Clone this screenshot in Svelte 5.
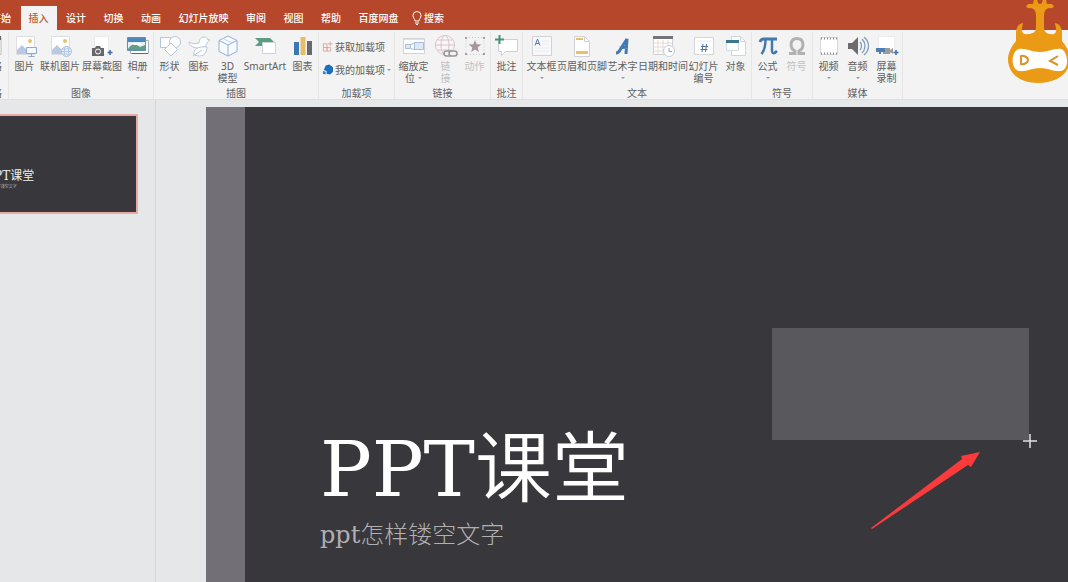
<script lang="ts">
  type Command = {
    icon: string;
    lines: string[];
    size?: 'medium' | 'wide' | 'full';
    menu?: boolean;
    disabled?: boolean;
  };

  type Group = { title: string; commands: Command[]; addins?: boolean };

  const tabs = ['开始', '插入', '设计', '切换', '动画', '幻灯片放映', '审阅', '视图', '帮助', '百度网盘'];
  let activeTab = $state('插入');

  const groups: Group[] = [
    {
      title: '图像',
      commands: [
        { icon: 'picture', lines: ['图片'] },
        { icon: 'online', lines: ['联机图片'], size: 'wide' },
        { icon: 'screenshot', lines: ['屏幕截图'], size: 'wide', menu: true },
        { icon: 'album', lines: ['相册'], menu: true },
      ],
    },
    {
      title: '插图',
      commands: [
        { icon: 'shapes', lines: ['形状'], menu: true },
        { icon: 'icons', lines: ['图标'] },
        { icon: 'cube', lines: ['3D', '模型'] },
        { icon: 'smartart', lines: ['SmartArt'], size: 'full' },
        { icon: 'chart', lines: ['图表'] },
      ],
    },
    { title: '加载项', commands: [], addins: true },
    {
      title: '链接',
      commands: [
        { icon: 'zoom', lines: ['缩放定', '位'], size: 'medium', menu: true },
        { icon: 'link', lines: ['链', '接'], disabled: true },
        { icon: 'action', lines: ['动作'], disabled: true },
      ],
    },
    { title: '批注', commands: [{ icon: 'comment', lines: ['批注'] }] },
    {
      title: '文本',
      commands: [
        { icon: 'textbox', lines: ['文本框'], size: 'medium', menu: true },
        { icon: 'header', lines: ['页眉和页脚'], size: 'full' },
        { icon: 'wordart', lines: ['艺术字'], size: 'medium', menu: true },
        { icon: 'date', lines: ['日期和时间'], size: 'full' },
        { icon: 'number', lines: ['幻灯片', '编号'], size: 'medium' },
        { icon: 'object', lines: ['对象'] },
      ],
    },
    {
      title: '符号',
      commands: [
        { icon: 'pi', lines: ['公式'], menu: true },
        { icon: 'omega', lines: ['符号'], disabled: true },
      ],
    },
    {
      title: '媒体',
      commands: [
        { icon: 'video', lines: ['视频'], menu: true },
        { icon: 'audio', lines: ['音频'], menu: true },
        { icon: 'record', lines: ['屏幕', '录制'] },
      ],
    },
  ];

  const landscape =
    '<path d="M3.500 1.500h18v18h-18z" fill="#fff" stroke="#dcdee4"/><circle cx="17" cy="6" r="2" fill="#e9c070"/><path d="M4 19v-4l5-5 6 6 2-2 4 4v1z" fill="#b9c9e2"/>';

  const icons: Record<string, string> = {
    picture:
      landscape +
      '<path d="M13.500 12.500h10v6h-10z" fill="#f5f9ff" stroke="#8fa9d0"/><path d="M18.500 19v2M15.500 21.500h6" stroke="#8fa9d0"/>',
    online:
      landscape +
      '<g fill="#edf3fc" stroke="#a5bbdc" stroke-width=".8"><circle cx="18.500" cy="16.500" r="5"/><ellipse cx="18.500" cy="16.500" rx="2.200" ry="5"/><path d="M13.500 16.500h10M14.500 14h8M14.500 19h8"/></g>',
    screenshot:
      '<path d="M4.500 1.500h14v18h-14z" fill="#fff" stroke="#eaeaea"/><path d="M2 13h3l1-2h4l1 2h3v8H2z" fill="#68686a"/><circle cx="8" cy="16.500" r="2.500" fill="#68686a" stroke="#fff"/><path d="M20 15v5M17.500 17.500h5" stroke="#3d6ca8" stroke-width="1.500"/>',
    album:
      '<path d="M4.500 5.500h18v13h-18z" fill="#fff" stroke="#a8b4c4"/><path d="M1.500 2.500h18v13h-18z" fill="#e6f0f8" stroke="#638db8"/><path d="M2 3h17v4H2z" fill="#4d87bd"/><path d="M2 14c4-6 8-5 12-2l5-2v5H2z" fill="#619f83"/><path d="M6 8h8l3 2H8z" fill="#fff"/><path d="M6 18.500h16" stroke="#666"/>',
    shapes:
      '<g fill="#fff" stroke="#b3c5df"><path d="M2.500 2.500h10v10h-10z"/><circle cx="17" cy="7" r="5.500"/><path d="m13 8 6.500 6.500L13 21l-6.500-6.500z"/></g>',
    icons:
      '<g fill="#fff" stroke="#b7c6de"><path d="M12 8c0-3 2-6 5-6 2 0 3 1 3.500 2.500L23 5l-2.500 2c-1 4-4 6-9 6-5 0-9-2-9.500-6 3 2 7 2 10 1z"/><path d="M7 20c-1-5 3-9 13-8 0 7-5 11-12 8z"/><path d="m6 21 9-6" /></g>',
    cube:
      '<path d="m12 1 9 4.500v11L12 21l-9-4.500v-11z" fill="#f8fbff" stroke="#8fb0d6"/><path d="m3 5.500 9 4.500 9-4.500M12 10v11" fill="none" stroke="#8fb0d6"/><path d="m7 3.500 9 4.500" stroke="#c5d7ed"/>',
    smartart:
      '<path d="M2 3h15l4 4-4 4H2l4-4z" fill="#5b9d81"/><path d="M9.500 7.500h13v11h-13z" fill="#fff" stroke="#cfd3d8"/>',
    chart:
      '<path d="M3 7h5v13H3z" fill="#3d76b5"/><path d="M9.500 2h5v18h-5z" fill="#e6bd68"/><path d="M16 6h5v14h-5z" fill="#68696d"/>',
    zoom:
      '<path d="M1.500 3.500h21v15h-21z" fill="#fff" stroke="#d0d3da"/><path d="M3.500 9.500h5v4h-5zM12.500 7.500h9v7h-9z" fill="#dce8f6" stroke="#a6bddb"/><path d="m8.500 10 4-2.500M8.500 13.500l4 1" stroke="#a6bddb"/><path d="M2 4h20v1H2z" fill="#dfe2e8"/>',
    link:
      '<g fill="#faf5f7" stroke="#d3c6cc"><circle cx="11" cy="10" r="9.500"/><ellipse cx="11" cy="10" rx="4" ry="9.500"/><path d="M2 10h18M4 5h14M4 15h14"/></g><g fill="#f3f3f3" stroke="#97979a" stroke-width="1.500"><rect x="10" y="16" width="8" height="5" rx="2.500"/><rect x="15" y="16" width="8" height="5" rx="2.500"/></g>',
    action:
      '<path d="M3 2.500h18v17H3z" fill="none" stroke="#d3c8cd" stroke-dasharray="1 2"/><path d="m12 5 1.700 4.300 4.600.3-3.600 2.900 1.200 4.500-3.900-2.500L8.100 17l1.200-4.500-3.600-2.900 4.600-.3z" fill="#a8959e"/><path d="M2 2h2v2H2zM20 2h2v2h-2zM2 18h2v2H2zM20 18h2v2h-2z" fill="#a29ca0"/>',
    comment:
      '<path d="M3.500 4.500h19v12h-12l-4 4v-4h-3z" fill="#fff" stroke="#cdd1d5"/><path d="M4.500 0v9M0 4.500h9" stroke="#4b9274" stroke-width="2"/>',
    textbox:
      '<path d="M2.500 1.500h19v19h-19z" fill="#f8f8fb" stroke="#d0d2d8"/><path d="M5 10.500 7.500 4l2.500 6.500M6 8.500h3" fill="none" stroke="#477db9"/><path d="M12 6h7M12 9h7M5 13h14M5 16h14" stroke="#ebecf0"/>',
    header:
      '<path d="M4.500 1.500h10l5 5v15h-15z" fill="#fff" stroke="#cfd1d6"/><path d="M14.500 1.500v5h5" fill="none" stroke="#cfd1d6"/><path d="M6 3h7v2H6zM6 16h12v3H6z" fill="#e5c06f"/>',
    wordart:
      '<path d="M5 18c2 0 3-1 4-3l7-11-1 15M9 13c3-1 6-1 8-1" fill="none" stroke="#4479b2" stroke-width="3"/>',
    date:
      '<path d="M2.500 2.500h19v17h-19z" fill="#fff" stroke="#d0d1d5"/><path d="M2 1h20v3H2z" fill="#747478"/><path d="M3 8h18M3 12h18M3 16h18M7 5v14M12 5v14M17 5v14" stroke="#e8d8d4"/><circle cx="18" cy="16" r="5.500" fill="#fff" stroke="#c3cfde"/><path d="M18 13v3.500h3" fill="none" stroke="#84a0c0"/>',
    number:
      '<path d="M2.500 2.500h19v17h-19z" fill="#fff" stroke="#d3d5db"/><path d="M5 6h14" stroke="#e9eaee"/><path d="m11 9-1 8M14.500 9l-1 8M9 11.500h7M8.500 14.500h7" stroke="#50749e"/>',
    object:
      '<path d="M7.500 1.500h9l5 5v14h-14z" fill="#fff" stroke="#d0d4d8"/><path d="M16.500 1.500v5h5" fill="none" stroke="#d0d4d8"/><path d="M2.500 6.500h12v9h-12z" fill="#fff" stroke="#d3dbe3"/><path d="M2 5h13v3H2z" fill="#39788c"/>',
    pi:
      '<path d="M4 7c1-3 2-3 4-3h13" fill="none" stroke="#4479ae" stroke-width="3"/><path d="M9.500 4c0 7-.5 11-4 15M16 4v11c0 4 2 4 5 1" fill="none" stroke="#4479ae" stroke-width="2.500"/>',
    omega:
      '<path d="M4 18.500h6V16c-6-3-5-12.500 2-12.500S20 13 14 16v2.500h6" fill="none" stroke="#b2b2b5" stroke-width="3"/>',
    video:
      '<path d="M3.500 2.500h17v17h-17z" fill="#fff" stroke="#d8d8da"/><path d="M4 3.500h16M4 18.500h16" stroke="#8b8b8f" stroke-width="2" stroke-dasharray="1 2"/>',
    audio:
      '<path d="M2 8h4l6-6v18l-6-6H2z" fill="#6c6c70"/><path d="M14 7c2 2 2 6 0 8M16 4c4 4 4 10 0 14M18 2c6 5 6 13 0 18" fill="none" stroke="#7f9dbd" stroke-width="1.300"/>',
    record:
      '<path d="M3.500 1.500h16v16h-16z" fill="#fff" stroke="#ececec"/><path d="M1 13h9v4H6v2H4v-2H1z" fill="#4f7fb1"/><path d="M10 13h5v6H8v-2h2zM15 15l3-2v6l-3-2z" fill="#9a9b9f"/><path d="M21 15v5M18.500 17.500h5" stroke="#3d6ca8" stroke-width="1.500"/>',
  };
</script>

<div class="app">
  <header class="titlebar">
    <nav class="tabs">
      {#each tabs as tab}
        <button class="tab" class:active={tab === activeTab} onclick={() => (activeTab = tab)}>{tab}</button>
      {/each}
      <button class="tab search">
        <svg viewBox="0 0 10 14" aria-hidden="true">
          <path d="M3 10c0-2-2-3-2-5.500a4 4 0 0 1 8 0C9 7 7 8 7 10zM3 12h4M4 13.500h2" fill="none" stroke="#fff" />
        </svg>
        搜索
      </button>
    </nav>
  </header>

  <div class="ribbon">
    <section class="group clipped">
      <div class="commands">
        <button class="command">
          <svg class="icon" viewBox="0 0 24 22" aria-hidden="true">
            <path d="M3 1.500h18v18H3z" fill="#fff" stroke="#bbb" />
            <path d="M3 1h18v4H3z" fill="#68686a" />
          </svg>
          <span>表格</span>
        </button>
      </div>
      <div class="group-title">表格</div>
    </section>
    {#each groups as group}
      <section class="group">
        {#if group.addins}
          <div class="addins">
            <button class="addin">
              <svg viewBox="0 0 12 12" aria-hidden="true">
                <path d="M1.500 2.500h4v4h-4zM1.500 6.500h4v4h-4zM5.500 6.500h4v4h-4zM9 0v5M6.500 2.500h5" fill="none" stroke="#e6a592" />
              </svg>
              获取加载项
            </button>
            <button class="addin">
              <svg viewBox="0 0 12 12" aria-hidden="true">
                <path d="m4 1 4-1 4 3v5l-3 3-4-1V7L2 6z" fill="#1b6fc2" />
                <path d="m1 7 3 1v3L1 10z" fill="#2f83d3" />
              </svg>
              我的加载项
              <i class="caret"></i>
            </button>
          </div>
        {:else}
          <div class="commands">
            {#each group.commands as command}
              <button class="command {command.size ?? ''}" disabled={command.disabled}>
                <svg class="icon" viewBox="0 0 24 22" aria-hidden="true">{@html icons[command.icon]}</svg>
                {#each command.lines as line, i}
                  <span class="line">
                    {line}
                    {#if command.menu && i === 1}<i class="caret"></i>{/if}
                  </span>
                {/each}
                {#if command.menu && command.lines.length === 1}
                  <span class="line"><i class="caret"></i></span>
                {/if}
              </button>
            {/each}
          </div>
        {/if}
        <div class="group-title">{group.title}</div>
      </section>
    {/each}
  </div>

  <main class="workspace">
    <aside class="thumbnails">
      <button class="thumb">
        <span class="thumb-title">PPT课堂</span>
        <span class="thumb-subtitle">ppt怎样镂空文字</span>
      </button>
    </aside>
    <div class="editor">
      <article class="slide">
        <h1>PPT课堂</h1>
        <p>ppt怎样镂空文字</p>
        <div class="drawn-shape"></div>
        <svg class="crosshair" viewBox="0 0 14 14" aria-hidden="true">
          <path d="M7 0v14M0 7h14" stroke="#e2e2e2" stroke-width="1.500" />
        </svg>
        <svg class="arrow" viewBox="0 0 110 78" aria-hidden="true">
          <path d="M0 76 91 7l-1-3 19-4-9 15-3-2L1 77z" fill="#fb3b3b" />
        </svg>
      </article>
    </div>
  </main>

  <svg class="mascot" viewBox="0 0 62 84" aria-hidden="true">
    <path
      d="M29 27V16c0-5-2-8-6-8-4 1-5-3-1-4h3c2 0 1-2 2-4h3c1 2 1 4 3 4s2-2 3-4h3c1 2 0 4 2 4h3c4 1 3 5-1 4-4 0-6 3-6 8v11c0 4 2 7 6 7 5 1 6-1 6-4 0-4-1-5-1-7 5 1 7 5 7 10v8c6 7 8 13 8 19-1 15-15 23-32 23S2 75 1 60c0-7 3-13 8-19v-8c0-5 2-9 7-10 0 2-1 3-1 7 0 3 2 5 6 4 5 0 8-2 8-7z"
      fill="#ea9a14"
    />
    <path
      d="M12 49c7-1 12 3 21 3s14-4 21-3c7 2 9 20 0 22-7 1-13-3-21-3s-14 4-21 3c-9-2-8-20 0-22z"
      fill="#fff"
    />
    <path d="M14 56v8c2 1 7-1 7-4s-5-5-7-4zM51 56l-8 5 8 4" fill="none" stroke="#dc9228" stroke-width="2" />
  </svg>
</div>

<style>
  :global(body) {
    margin: 0;
    overflow: hidden;
  }

  .app {
    position: relative;
    display: flex;
    flex-direction: column;
    height: 100vh;
    overflow: hidden;
    background: #e6e7e8;
    color: #606060;
    font-family: "Noto Sans", "Noto Sans CJK SC", sans-serif;
    font-size: 10px;
    line-height: 12px;
  }

  button {
    padding: 0;
    border: 0;
    background: none;
    color: inherit;
    font: inherit;
    white-space: nowrap;
  }

  .titlebar {
    flex: none;
    height: 30px;
    background: #b7472a;
  }

  .tabs {
    display: flex;
    justify-content: space-between;
    align-items: flex-end;
    width: 473px;
    height: 100%;
    margin-left: -17px;
  }

  .tab {
    height: 24px;
    padding: 0 8px;
    color: #fff;
    font-weight: 500;
  }

  .tab.active {
    background: #f3f3f3;
    color: #c0583e;
  }

  .search {
    display: flex;
    align-items: center;
    gap: 2px;
    padding: 0 12px 0 4px;
  }

  .search svg {
    width: 10px;
    height: 14px;
  }

  .ribbon {
    display: flex;
    flex: none;
    background: #f3f3f3;
    border-bottom: 1px solid #dededf;
  }

  .group {
    display: flex;
    flex: none;
    flex-direction: column;
    margin: 2px 0 0;
    padding: 1px 1px 0;
    border-right: 1px solid #e6e6e6;
  }

  .clipped {
    width: 2px;
    align-items: flex-end;
    padding-right: 5px;
    overflow: hidden;
  }

  .clipped .group-title,
  .clipped .command {
    width: 22px;
  }

  .commands {
    display: flex;
    height: 54px;
  }

  .command {
    display: flex;
    flex-direction: column;
    align-items: center;
    width: 29px;
    padding-top: 2px;
  }

  .command.medium {
    width: 35px;
  }

  .command.wide {
    width: 42px;
  }

  .command.full {
    width: 46px;
  }

  .command:disabled {
    color: #c4c0c2;
  }

  .icon {
    flex: none;
    width: 24px;
    height: 22px;
    margin-bottom: 3px;
  }

  .line {
    display: flex;
    align-items: center;
    gap: 3px;
    min-height: 12px;
  }

  .caret {
    border: 2px solid transparent;
    border-top-color: #999;
    border-bottom: 0;
  }

  .group-title {
    height: 12px;
    text-align: center;
    white-space: nowrap;
  }

  .addins {
    display: flex;
    flex-direction: column;
    gap: 11px;
    height: 46px;
    padding: 8px 2px 0;
  }

  .addin {
    display: flex;
    align-items: center;
    gap: 2px;
  }

  .addin svg {
    width: 11px;
    height: 12px;
  }

  .workspace {
    display: flex;
    flex: 1;
    min-height: 0;
  }

  .thumbnails {
    flex: none;
    width: 156px;
    padding-top: 14px;
    border-right: 1px solid #d5d6d7;
    box-sizing: border-box;
  }

  .thumb {
    display: flex;
    flex-direction: column;
    align-items: flex-start;
    box-sizing: border-box;
    width: 176px;
    height: 100px;
    margin-left: -38px;
    padding: 52px 0 0 22px;
    border: 2px solid #e8aaa2;
    background: #38373b;
    color: #eee;
    font-family: "DejaVu Serif", "Noto Sans CJK SC", serif;
  }

  .thumb-title {
    font-size: 12px;
    line-height: 16px;
  }

  .thumb-subtitle {
    color: #aaa;
    font-size: 4px;
    line-height: 6px;
  }

  .editor {
    display: flex;
    flex: 1;
    padding: 7px 0 0 50px;
  }

  .slide {
    position: relative;
    flex: 1;
    padding: 321px 0 0 75px;
    overflow: hidden;
    border-left: 39px solid #727076;
    background: #38373b;
    font-family: "DejaVu Serif", "Noto Sans CJK SC", serif;
  }

  h1 {
    margin: 0;
    color: #fff;
    font-size: 77px;
    font-weight: 350;
    line-height: 84px;
  }

  p {
    margin: 7px 0 0;
    color: #b0afb2;
    font-size: 24px;
    font-weight: 300;
    line-height: 32px;
  }

  .drawn-shape {
    position: absolute;
    top: 221px;
    left: 527px;
    width: 257px;
    height: 112px;
    background: #59585c;
  }

  .crosshair {
    position: absolute;
    top: 327px;
    left: 778px;
    width: 14px;
    height: 14px;
  }

  .arrow {
    position: absolute;
    top: 345px;
    left: 626px;
    width: 110px;
    height: 78px;
  }

  .mascot {
    position: absolute;
    top: 0;
    right: -1px;
    width: 62px;
    height: 84px;
  }
</style>
